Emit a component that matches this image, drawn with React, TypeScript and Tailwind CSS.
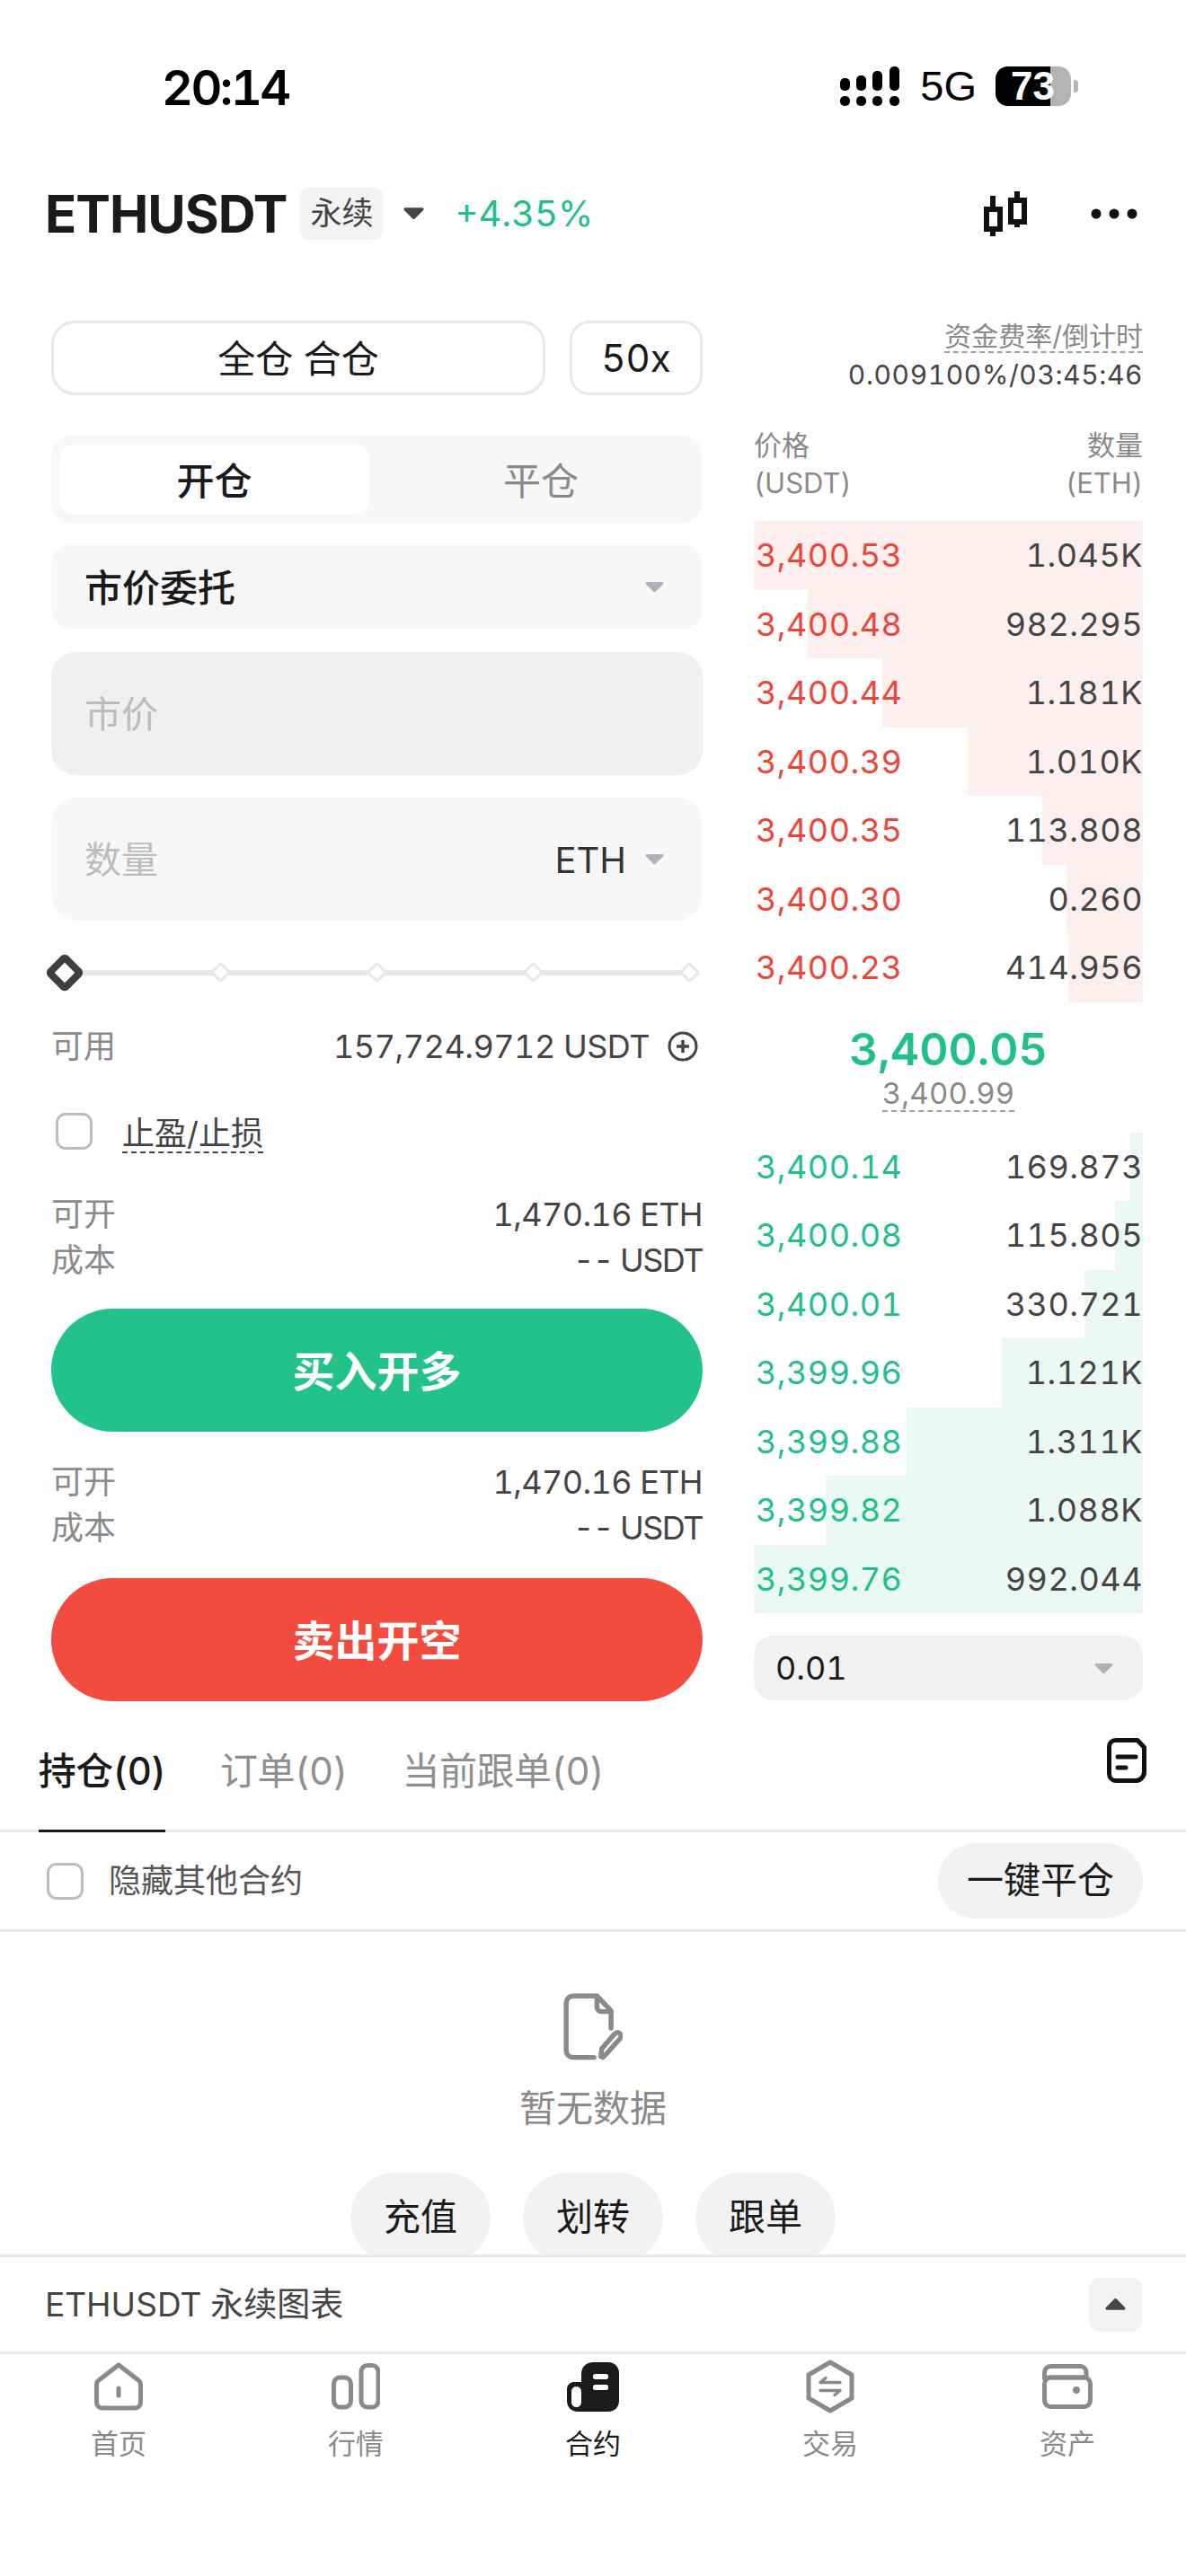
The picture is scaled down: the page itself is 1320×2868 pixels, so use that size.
const ASKS = [
  { price: "3,400.53", qty: "1.045K", width: 433 },
  { price: "3,400.48", qty: "982.295", width: 373 },
  { price: "3,400.44", qty: "1.181K", width: 290 },
  { price: "3,400.39", qty: "1.010K", width: 195 },
  { price: "3,400.35", qty: "113.808", width: 112 },
  { price: "3,400.30", qty: "0.260", width: 85 },
  { price: "3,400.23", qty: "414.956", width: 83 },
];

const BIDS = [
  { price: "3,400.14", qty: "169.873", width: 14 },
  { price: "3,400.08", qty: "115.805", width: 31 },
  { price: "3,400.01", qty: "330.721", width: 65 },
  { price: "3,399.96", qty: "1.121K", width: 157 },
  { price: "3,399.88", qty: "1.311K", width: 263 },
  { price: "3,399.82", qty: "1.088K", width: 353 },
  { price: "3,399.76", qty: "992.044", width: 433 },
];

function Caret({ className }: { className: string }) {
  return <svg viewBox="0 0 24 14" className={className} fill="currentColor"><path d="M3 1h18c1.500 0 2.200 1.600 1.200 2.700l-9 9c-.7.700-1.700.700-2.400 0l-9-9C.800 2.600 1.500 1 3 1z" /></svg>;
}

function BookRow({ price, qty, width, side }: { price: string; qty: string; width: number; side: "ask" | "bid" }) {
  return (
    <div className="relative flex h-[76.5px] items-center justify-between text-[36px] tracking-[0.5px]">
      <div className={`absolute inset-y-0 right-0 ${side === "ask" ? "bg-[#fdefee]" : "bg-[#eaf9f4]"}`} style={{ width }} />
      <span className={`relative pl-[2px] ${side === "ask" ? "text-[#ee4539]" : "text-[#22bf8c]"}`}>{price}</span>
      <span className="relative text-[#444444]">{qty}</span>
    </div>
  );
}

function Cost() {
  return (
    <div className="text-[36px] leading-[51px]">
      <div className="flex justify-between"><span className="text-[#8a8a8a]">可开</span><span className="tracking-[-0.6px] text-[#444444]">1,470.16 ETH</span></div>
      <div className="flex justify-between"><span className="text-[#8a8a8a]">成本</span><span className="tracking-[-1.500px] text-[#444444]">-- USDT</span></div>
    </div>
  );
}

function SmallDiamond() {
  return <span className="relative block h-[17px] w-[17px] rotate-45 rounded-[3px] border-[3px] border-[#e8e8e8] bg-white" />;
}

function Checkbox() {
  return <span className="block h-[41px] w-[41px] rounded-[11px] border-[3px] border-[#bdbdbd]" />;
}

function NavItem({ label, active, children }: { label: string; active?: boolean; children: React.ReactNode }) {
  return (
    <div className="flex flex-col items-center">
      <div className="flex h-[62px] items-center justify-center">{children}</div>
      <span className={`mt-[13px] text-[31px] leading-[40px] ${active ? "text-[#1a1a1a]" : "text-[#8a8a8a]"}`}>{label}</span>
    </div>
  );
}

export default function App() {
  return (
    <div className="h-[2868px] w-[1320px] overflow-hidden bg-white tabular-nums [font-family:Inter,'Noto_Sans_CJK_SC',sans-serif]">
      {/* status bar */}
      <div className="flex h-[190px] items-start justify-between pl-[180px] pr-[120px] pt-[66px]">
        <span className="text-[54px] font-semibold leading-[64px] tracking-[-2.500px] text-black">20:14</span>
        <div className="mt-[8px] flex items-center">
          <svg viewBox="0 0 66 44" className="h-[44px] w-[66px]" fill="black">
            <rect x="0" y="33" width="11" height="11" rx="5" /><rect x="18" y="33" width="11" height="11" rx="5" /><rect x="36" y="33" width="11" height="11" rx="5" /><rect x="55" y="33" width="11" height="11" rx="5" />
            <rect x="0" y="13" width="11" height="14" rx="5" /><rect x="18" y="10" width="11" height="17" rx="5" /><rect x="36" y="5" width="11" height="22" rx="5" /><rect x="55" y="0" width="11" height="27" rx="5" />
          </svg>
          <span className="ml-[23px] text-[47px] leading-[44px] text-black [font-family:'Liberation_Sans',sans-serif]">5G</span>
          <div className="relative ml-[21px] h-[44px] w-[84px]">
            <div className="h-full w-full overflow-hidden rounded-[14px] bg-[#b3b3b3]">
              <div className="h-full w-[61px] bg-black" />
            </div>
            <span className="absolute left-[17px] top-0 text-[44px] font-bold leading-[44px] text-white [font-family:'Liberation_Sans',sans-serif]">73</span>
          </div>
          <div className="ml-[3px] h-[14px] w-[5px] rounded-r-[4px] bg-[#b3b3b3]" />
        </div>
      </div>

      {/* title */}
      <div className="flex h-[95px] items-center justify-between pl-[50px] pr-[54px]">
        <div className="flex items-center">
          <span className="text-[58px] font-bold leading-none tracking-[-1px] text-[#1a1a1a]">ETHUSDT</span>
          <span className="ml-[14px] flex h-[58px] w-[94px] items-center justify-center rounded-[12px] bg-[#f3f3f3] text-[35px] text-[#444444]">永续</span>
          <Caret className="ml-[21px] h-[15px] w-[25px] text-[#444444]" />
          <span className="ml-[33px] text-[40px] text-[#22bf8c]">+4.35%</span>
        </div>
        <div className="flex items-center">
          <svg viewBox="0 0 50 50" className="h-[50px] w-[50px]" fill="none" stroke="#111111" strokeWidth="6">
            <path d="M11 5v45M38 0v40" />
            <rect x="4" y="20" width="15" height="22" fill="white" />
            <rect x="31" y="10" width="15" height="24" fill="white" />
          </svg>
          <svg viewBox="0 0 52 12" className="ml-[70px] h-[12px] w-[52px]" fill="#111111"><circle cx="6" cy="6" r="5.500" /><circle cx="26" cy="6" r="5.500" /><circle cx="46" cy="6" r="5.500" /></svg>
        </div>
      </div>

      {/* trade panel + order book */}
      <div className="mt-[72px] flex pl-[57px] pr-[48px]">
        <div className="w-[725px]">
          <div className="flex gap-[27px] text-[42px] text-[#1a1a1a]">
            <div className="flex h-[83px] w-[550px] items-center justify-center rounded-[26px] border-[3px] border-[#e8e8e8] pt-[2px]">全仓 合仓</div>
            <div className="flex h-[83px] w-[148px] items-center justify-center rounded-[22px] border-[3px] border-[#e8e8e8]">50x</div>
          </div>

          <div className="mt-[45px] flex h-[97px] rounded-[22px] bg-[#f7f7f7] p-[9px] text-[42px]">
            <div className="flex w-[345px] items-center justify-center rounded-[18px] bg-white pt-[3px] font-medium text-[#1a1a1a]">开仓</div>
            <div className="flex flex-1 items-center justify-center pl-[20px] pt-[3px] text-[#8a8a8a]">平仓</div>
          </div>

          <div className="mt-[24px] flex h-[94px] items-center justify-between rounded-[22px] bg-[#f7f7f7] pl-[37px] pr-[42px]">
            <span className="pt-[3px] text-[42px] font-medium text-[#1a1a1a]">市价委托</span>
            <Caret className="h-[13px] w-[23px] text-[#b0b0b8]" />
          </div>

          <div className="mt-[26px] flex h-[137px] items-center rounded-[28px] bg-[#f0f0f0] pl-[37px] pt-[3px] text-[41px] text-[#bcbcbc]">市价</div>

          <div className="mt-[25px] flex h-[137px] items-center justify-between rounded-[28px] bg-[#f7f7f7] pl-[37px] pr-[42px]">
            <span className="pt-[3px] text-[41px] text-[#bcbcbc]">数量</span>
            <div className="flex items-center">
              <span className="pt-[2px] text-[40px] text-[#333333]">ETH</span>
              <Caret className="ml-[20px] h-[13px] w-[23px] text-[#b0b0b8]" />
            </div>
          </div>

          {/* leverage slider */}
          <div className="relative ml-[-9px] mt-[35px] flex h-[45px] w-[735px] items-center pl-[8px]">
            <div className="absolute left-[37px] top-[20px] h-[6px] w-[688px] bg-[#e8e8e8]" />
            <span className="relative h-[32px] w-[32px] rotate-45 rounded-[6px] border-[8px] border-[#3f3f3f] bg-white" />
            <div className="ml-[149px] flex gap-[157px]">
              <SmallDiamond />
              <SmallDiamond />
              <SmallDiamond />
              <SmallDiamond />
            </div>
          </div>

          <div className="mt-[40px] flex h-[40px] items-center justify-between pr-[5px] text-[36px]">
            <span className="text-[#8a8a8a]">可用</span>
            <div className="flex items-center text-[#444444]">
              <span className="tracking-[-0.5px]">157,724.9712 USDT</span>
              <svg viewBox="0 0 34 34" className="ml-[20px] h-[34px] w-[34px]" fill="none" stroke="#444444" strokeWidth="3"><circle cx="17" cy="17" r="15" /><path d="M17 10v14M10 17h14" strokeWidth="3.500" /></svg>
            </div>
          </div>

          <div className="mt-[54px] flex h-[41px] items-center pl-[5px]">
            <Checkbox />
            <span className="ml-[33px] mt-[6px] border-b-2 border-dashed border-[#444444] text-[36px] leading-[40px] text-[#444444]">止盈/止损</span>
          </div>

          <div className="mt-[47px]"><Cost /></div>
          <div className="mt-[28px] flex h-[137px] items-center justify-center rounded-full bg-[#23c28a] pt-[3px] text-[47px] font-semibold text-white">买入开多</div>
          <div className="mt-[31px]"><Cost /></div>
          <div className="mt-[30px] flex h-[137px] items-center justify-center rounded-full bg-[#f44b3f] pt-[3px] text-[47px] font-semibold text-white">卖出开空</div>
        </div>

        <div className="ml-[57px] w-[433px]">
          <div className="flex flex-col items-end">
            <span className="border-b-2 border-dashed border-[#a0a0a0] text-[30px] leading-[34px] text-[#8a8a8a]">资金费率/倒计时</span>
            <span className="mt-[6px] text-[30px] leading-[36px] tracking-[0.6px] text-[#444444]">0.009100%/03:45:46</span>
          </div>
          <div className="mt-[40px] flex justify-between text-[31px] leading-[42px] text-[#8a8a8a]">
            <div>价格<br />(USDT)</div>
            <div className="text-right">数量<br />(ETH)</div>
          </div>
          <div className="mt-[21px]">
            {ASKS.map((row) => <BookRow key={row.price} {...row} side="ask" />)}
          </div>
          <div className="flex h-[145px] flex-col items-center pt-[22px]">
            <span className="text-[50px] font-semibold leading-[60px] text-[#22bf8c]">3,400.05</span>
            <span className="border-b-2 border-dashed border-[#a0a0a0] text-[33px] leading-[38px] tracking-[0.2px] text-[#8a8a8a]">3,400.99</span>
          </div>
          <div>
            {BIDS.map((row) => <BookRow key={row.price} {...row} side="bid" />)}
          </div>
          <div className="mt-[25px] flex h-[72px] items-center justify-between rounded-[22px] bg-[#f1f1f1] pl-[24px] pr-[32px]">
            <span className="text-[36px] text-[#1a1a1a]">0.01</span>
            <Caret className="h-[13px] w-[23px] text-[#b0b0b8]" />
          </div>
        </div>
      </div>

      {/* position tabs */}
      <div className="mt-[5px] flex h-[141px] justify-between border-b-[3px] border-[#e8e8e8] pl-[43px] pr-[44px]">
        <div className="flex whitespace-nowrap text-[42px] tracking-[-0.5px]">
          <div className="mb-[-3px] flex h-[141px] w-[141px] items-start justify-center border-b-[3px] border-[#1a1a1a] pt-[46px] font-medium leading-[54px] text-[#1a1a1a]">持仓(0)</div>
          <div className="ml-[61px] pt-[46px] leading-[54px] text-[#8f8f8f]">订单(0)</div>
          <div className="ml-[61px] pt-[46px] leading-[54px] text-[#8f8f8f]">当前跟单(0)</div>
        </div>
        <svg viewBox="0 0 44 50" className="mt-[36px] h-[50px] w-[44px]" fill="none" stroke="#111111" strokeWidth="5" strokeLinecap="round" strokeLinejoin="round">
          <path d="M10 2.500h24l7.500 8v27c0 5.500-4 10-9.500 10H10c-4.500 0-7.500-3.500-7.500-8V10c0-4.500 3-7.500 7.500-7.500z" />
          <path d="M12 21h20M12 33h9" />
        </svg>
      </div>

      <div className="flex h-[111px] items-center justify-between border-b-[3px] border-[#e8e8e8] pl-[52px] pr-[48px]">
        <div className="flex items-center">
          <Checkbox />
          <span className="ml-[28px] text-[36px] text-[#555555]">隐藏其他合约</span>
        </div>
        <div className="flex h-[84px] w-[228px] items-center justify-center rounded-full bg-[#f2f2f2] text-[41px] text-[#1a1a1a]">一键平仓</div>
      </div>

      {/* empty state, cut off by the chart bar */}
      <div className="flex h-[359px] flex-col items-center overflow-hidden pt-[68px]">
        <svg viewBox="0 0 60 70" className="h-[76px] w-[66px] shrink-0" fill="none" stroke="#8a8a8a" strokeWidth="5" strokeLinejoin="round" strokeLinecap="round">
          <path d="M31 66H10c-4.500 0-7.500-3-7.500-7.500v-47C2.500 6 5.500 3 10 3h24l14.500 15v18" />
          <path d="M34 3v11c0 3 2 5 5 5h9" />
          <path d="M40 66l-2-1 1-8 13-15c2-2 4-2 5.500-.5s1.500 3.500 0 5.500L44 62z" />
        </svg>
        <span className="mt-[24px] shrink-0 text-[41px] leading-[56px] text-[#8a8a8a]">暂无数据</span>
        <div className="mt-[44px] flex shrink-0 gap-[36px]">
          {["充值", "划转", "跟单"].map((label) => (
            <div key={label} className="flex h-[100px] w-[156px] shrink-0 items-center justify-center rounded-full bg-[#f2f2f2] text-[41px] text-[#1a1a1a]">{label}</div>
          ))}
        </div>
      </div>

      {/* chart bar */}
      <div className="flex h-[111px] items-center justify-between border-y-[3px] border-[#e8e8e8] pl-[50px] pr-[49px]">
        <span className="text-[37px] text-[#444444]">ETHUSDT 永续图表</span>
        <div className="flex h-[60px] w-[59px] items-center justify-center rounded-[12px] bg-[#f3f3f3]">
          <Caret className="h-[15px] w-[25px] rotate-180 text-[#444444]" />
        </div>
      </div>

      {/* bottom nav */}
      <div className="grid grid-cols-5 pt-[5px]">
        <NavItem label="首页">
          <svg viewBox="0 0 54 54" className="h-[54px] w-[54px]" fill="none" stroke="#8a8a8a" strokeWidth="5" strokeLinejoin="round" strokeLinecap="round">
            <path d="M27 3L49 20c1.500 1 2.500 3 2.500 5v20c0 3-2.500 6-6 6H8.500c-3.500 0-6-3-6-6V25c0-2 1-4 2.500-5z" />
            <path d="M27 29v8" />
          </svg>
        </NavItem>
        <NavItem label="行情">
          <svg viewBox="0 0 54 52" className="h-[52px] w-[54px]" fill="none" stroke="#8a8a8a" strokeWidth="5">
            <rect x="2.500" y="16" width="19" height="33" rx="7" />
            <rect x="33" y="2.500" width="19" height="46.500" rx="7" />
          </svg>
        </NavItem>
        <NavItem label="合约" active>
          <svg viewBox="0 0 58 55" className="h-[55px] w-[58px]">
            <path d="M30 0h16c7 0 12 5 12 12v31c0 7-5 12-12 12H12C5 55 0 50 0 43V30c0-5 4-8 8-8h8V14C16 5 21 0 30 0z" fill="#1a1a1a" />
            <rect x="5" y="27" width="11" height="23" rx="5.500" fill="white" />
            <rect x="29" y="13" width="17" height="6" rx="2.500" fill="white" />
            <rect x="29" y="25" width="17" height="6" rx="2.500" fill="white" />
          </svg>
        </NavItem>
        <NavItem label="交易">
          <svg viewBox="0 0 54 60" className="h-[60px] w-[54px]" fill="none" stroke="#8a8a8a" strokeWidth="5" strokeLinejoin="round">
            <path d="M27 3l24 14v26L27 57 3 43V17z" />
            <path d="M16 25.500h22M16 25.500l6-5M38 34.500H16M38 34.500l-6 5" strokeWidth="3.500" strokeLinecap="round" />
          </svg>
        </NavItem>
        <NavItem label="资产">
          <svg viewBox="0 0 56 50" className="h-[50px] w-[56px]" fill="none" stroke="#8a8a8a" strokeWidth="5">
            <path d="M10 2.500h32c4 0 7 3 7 7v5.500H2.500V10C2.500 5.500 5.500 2.500 10 2.500z" />
            <rect x="2.500" y="15" width="51" height="32.500" rx="7" />
            <circle cx="38" cy="29" r="4" fill="#8a8a8a" stroke="none" />
          </svg>
        </NavItem>
      </div>
    </div>
  );
}
